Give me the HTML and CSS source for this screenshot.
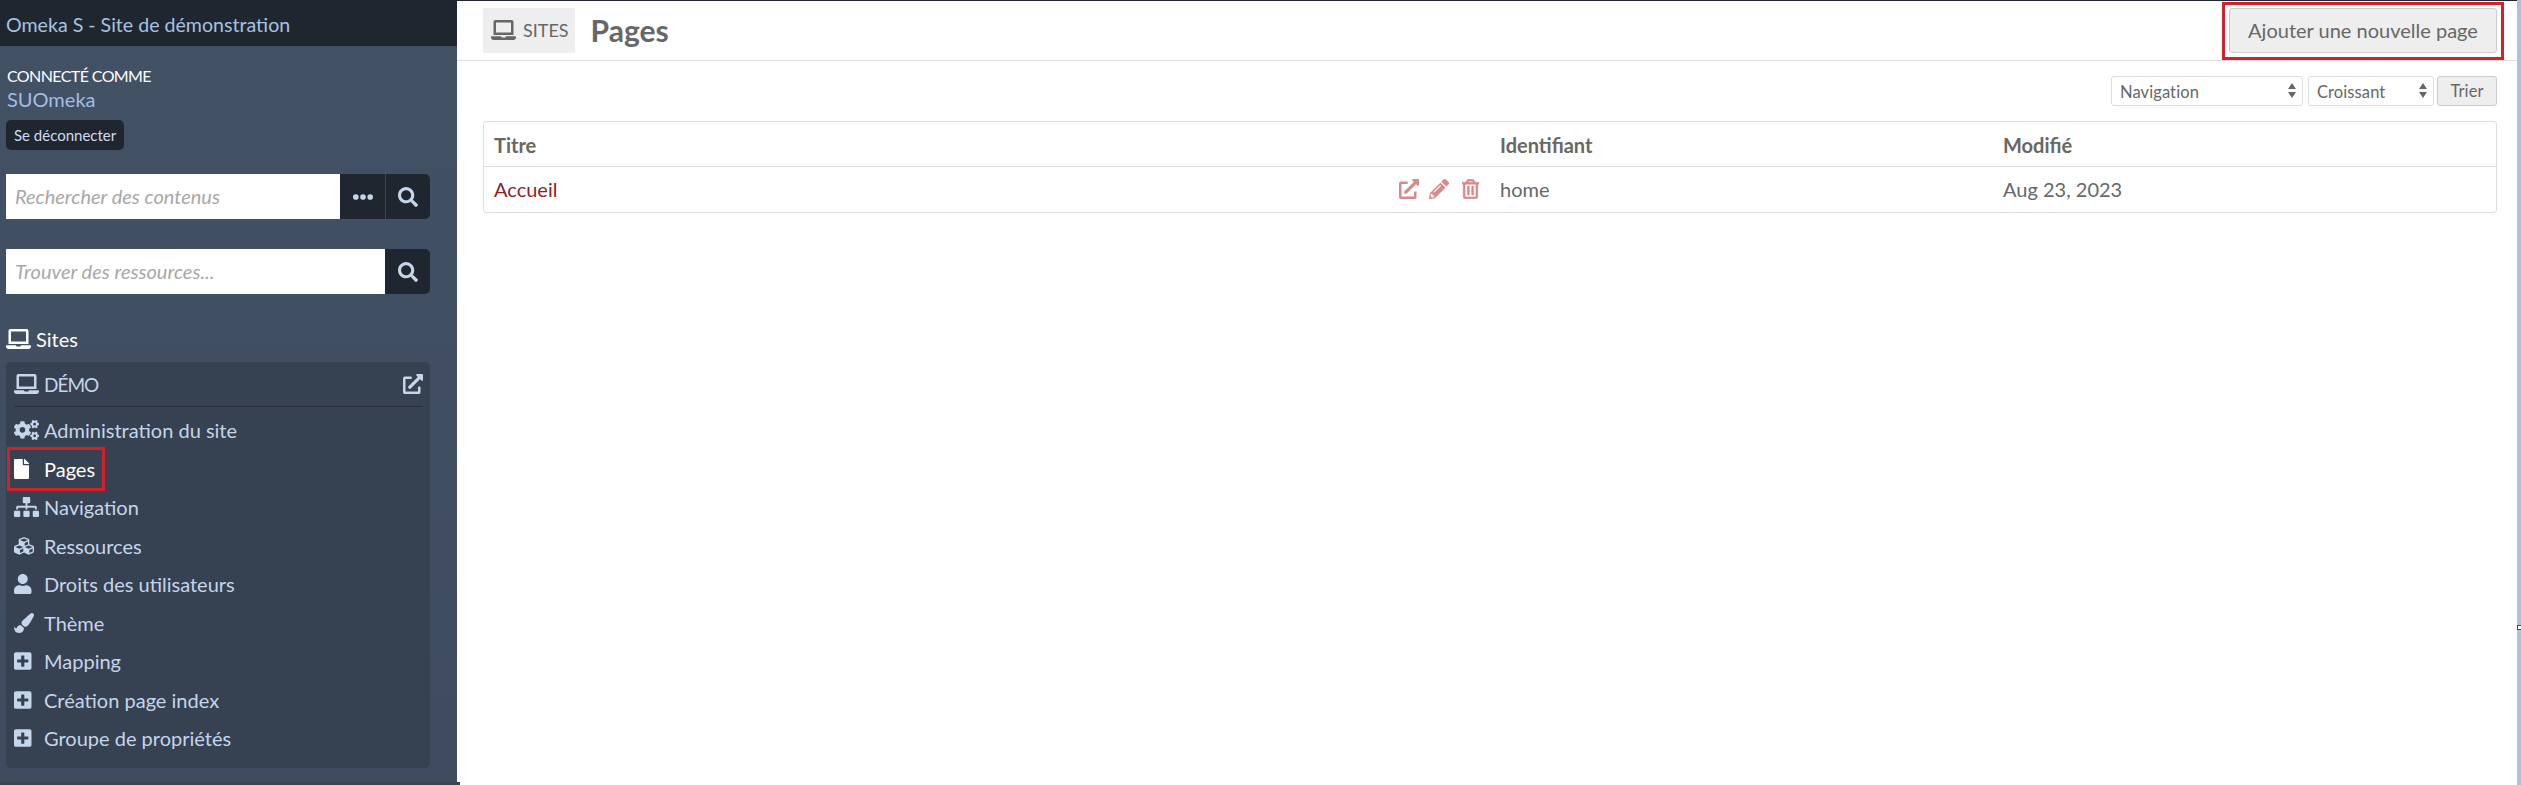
FILE: index.html
```html
<!DOCTYPE html>
<html lang="fr">
<head>
  <meta charset="UTF-8">
  <title>Pages · Omeka S</title>
  <link rel="stylesheet" href="styles.css">
</head>
<body>
<svg class="sprite" aria-hidden="true">
  <symbol id="i-laptop" viewBox="0 0 640 512"><path d="M624 416H381.54c-.74 19.81-14.71 32-32.74 32H288c-18.69 0-33.02-17.47-32.77-32H16c-8.8 0-16 7.2-16 16v16c0 35.2 28.8 64 64 64h512c35.2 0 64-28.8 64-64v-16c0-8.8-7.2-16-16-16zM576 48c0-26.4-21.6-48-48-48H112C85.6 0 64 21.6 64 48v336h512V48zm-64 272H128V64h384v256z"/></symbol>
  <symbol id="i-search" viewBox="0 0 512 512"><path d="M505 442.7L405.3 343c-4.5-4.5-10.6-7-17-7H372c27.6-35.3 44-79.7 44-128C416 93.1 322.9 0 208 0S0 93.1 0 208s93.1 208 208 208c48.3 0 92.7-16.4 128-44v16.3c0 6.4 2.5 12.5 7 17l99.7 99.7c9.4 9.4 24.6 9.4 33.9 0l28.3-28.3c9.4-9.4 9.4-24.6.1-34zM208 336c-70.7 0-128-57.2-128-128 0-70.7 57.2-128 128-128 70.7 0 128 57.2 128 128 0 70.7-57.2 128-128 128z"/></symbol>
  <symbol id="i-dots" viewBox="0 0 512 512"><circle cx="72" cy="256" r="72"/><circle cx="256" cy="256" r="72"/><circle cx="440" cy="256" r="72"/></symbol>
  <symbol id="i-external" viewBox="0 0 512 512"><path d="M432,320H400a16,16,0,0,0-16,16V448H64V128H208a16,16,0,0,0,16-16V80a16,16,0,0,0-16-16H48A48,48,0,0,0,0,112V464a48,48,0,0,0,48,48H400a48,48,0,0,0,48-48V336A16,16,0,0,0,432,320ZM488,0h-128c-21.37,0-32.05,25.91-17,41l35.73,35.73L135,320.37a24,24,0,0,0,0,34L157.67,377a24,24,0,0,0,34,0L435.28,133.32,471,169c15,15,41,4.5,41-17V24A24,24,0,0,0,488,0Z"/></symbol>
  <symbol id="i-cogs" viewBox="0 0 640 512" preserveAspectRatio="xMinYMid"><path d="M512.1 191l-8.2 14.3c-3 5.3-9.4 7.5-15.1 5.4-11.8-4.4-22.6-10.7-32.1-18.6-4.6-3.8-5.8-10.5-2.8-15.7l8.2-14.3c-6.9-8-12.3-17.3-15.9-27.4h-16.5c-6 0-11.2-4.3-12.2-10.3-2-12-2.1-24.6 0-37.1 1-6 6.2-10.4 12.2-10.4h16.5c3.6-10.1 9-19.4 15.9-27.4l-8.2-14.3c-3-5.2-1.9-11.9 2.8-15.7 9.5-7.9 20.4-14.2 32.1-18.6 5.7-2.1 12.1.1 15.1 5.4l8.2 14.3c10.5-1.9 21.2-1.9 31.7 0L552 6.3c3-5.3 9.4-7.5 15.1-5.4 11.8 4.4 22.6 10.7 32.1 18.6 4.6 3.8 5.8 10.5 2.8 15.7l-8.2 14.3c6.9 8 12.3 17.3 15.9 27.4h16.5c6 0 11.2 4.3 12.2 10.3 2 12 2.1 24.6 0 37.1-1 6-6.2 10.4-12.2 10.4h-16.5c-3.6 10.1-9 19.4-15.9 27.4l8.2 14.3c3 5.2 1.9 11.9-2.8 15.7-9.5 7.9-20.4 14.2-32.1 18.6-5.7 2.1-12.1-.1-15.1-5.4l-8.2-14.3c-10.4 1.9-21.2 1.9-31.7 0zm-10.5-58.8c38.5 29.6 82.4-14.3 52.8-52.8-38.5-29.7-82.4 14.3-52.8 52.8zM386.3 286.1l33.7 16.8c10.1 5.8 14.5 18.1 10.5 29.1-8.9 24.2-26.4 46.4-42.6 65.8-7.4 8.9-20.2 11.1-30.3 5.3l-29.1-16.8c-16 13.7-34.6 24.6-54.9 31.7v33.6c0 11.6-8.3 21.6-19.7 23.6-24.6 4.2-50.4 4.4-75.9 0-11.5-2-20-11.9-20-23.6V418c-20.3-7.2-38.9-18-54.9-31.7L74 403c-10 5.8-22.9 3.6-30.3-5.3-16.2-19.4-33.3-41.6-42.2-65.7-4-10.9.4-23.2 10.5-29.1l33.3-16.8c-3.9-20.9-3.9-42.4 0-63.4L12 205.8c-10.1-5.8-14.6-18.1-10.5-29 8.9-24.2 26-46.4 42.2-65.8 7.4-8.9 20.2-11.1 30.3-5.3l29.1 16.8c16-13.7 34.6-24.6 54.9-31.7V57.1c0-11.5 8.2-21.5 19.6-23.5 24.6-4.2 50.5-4.4 76-.1 11.5 2 20 11.9 20 23.6v33.6c20.3 7.2 38.9 18 54.9 31.7l29.1-16.8c10-5.8 22.9-3.6 30.3 5.3 16.2 19.4 33.2 41.6 42.1 65.8 4 10.9.1 23.2-10 29.1l-33.7 16.8c3.9 21 3.9 42.5 0 63.5zm-117.6 21.1c59.2-77-28.7-164.9-105.7-105.7-59.2 77 28.7 164.9 105.7 105.7zm243.4 182.7l-8.2 14.3c-3 5.3-9.4 7.5-15.1 5.4-11.8-4.4-22.6-10.7-32.1-18.6-4.6-3.8-5.8-10.5-2.8-15.7l8.2-14.3c-6.9-8-12.3-17.3-15.9-27.4h-16.5c-6 0-11.2-4.3-12.2-10.3-2-12-2.1-24.6 0-37.1 1-6 6.2-10.4 12.2-10.4h16.5c3.6-10.1 9-19.4 15.9-27.4l-8.2-14.3c-3-5.2-1.9-11.9 2.8-15.7 9.5-7.9 20.4-14.2 32.1-18.6 5.7-2.1 12.1.1 15.1 5.4l8.2 14.3c10.5-1.9 21.2-1.9 31.7 0l8.2-14.3c3-5.3 9.4-7.5 15.1-5.4 11.8 4.4 22.6 10.7 32.1 18.6 4.6 3.8 5.8 10.5 2.8 15.7l-8.2 14.3c6.9 8 12.3 17.3 15.9 27.4h16.5c6 0 11.2 4.3 12.2 10.3 2 12 2.1 24.6 0 37.1-1 6-6.2 10.4-12.2 10.4h-16.5c-3.6 10.1-9 19.4-15.9 27.4l8.2 14.3c3 5.2 1.9 11.9-2.8 15.7-9.5 7.9-20.4 14.2-32.1 18.6-5.7 2.1-12.1-.1-15.1-5.4l-8.2-14.3c-10.4 1.9-21.2 1.9-31.7 0zM501.6 431c38.5 29.6 82.4-14.3 52.8-52.8-38.5-29.6-82.4 14.3-52.8 52.8z"/></symbol>
  <symbol id="i-file" viewBox="0 0 384 512" preserveAspectRatio="xMinYMid"><path d="M224 136V0H24C10.7 0 0 10.7 0 24v464c0 13.3 10.7 24 24 24h336c13.3 0 24-10.7 24-24V160H248c-13.2 0-24-10.8-24-24zm160-14.1v6.1H256V0h6.1c6.4 0 12.5 2.5 17 7l97.9 98c4.5 4.5 7 10.6 7 16.9z"/></symbol>
  <symbol id="i-sitemap" viewBox="0 0 640 512" preserveAspectRatio="xMinYMid"><path d="M128 352H32c-17.67 0-32 14.33-32 32v96c0 17.67 14.33 32 32 32h96c17.67 0 32-14.33 32-32v-96c0-17.67-14.33-32-32-32zm-24-80h192v48h48v-48h192v48h48v-57.59c0-21.17-17.23-38.41-38.41-38.41H344v-64h40c17.67 0 32-14.33 32-32V32c0-17.67-14.33-32-32-32H256c-17.67 0-32 14.33-32 32v96c0 17.67 14.33 32 32 32h40v64H94.41C73.23 224 56 241.23 56 262.41V320h48v-48zm264 80h-96c-17.67 0-32 14.33-32 32v96c0 17.67 14.33 32 32 32h96c17.67 0 32-14.33 32-32v-96c0-17.67-14.33-32-32-32zm240 0h-96c-17.67 0-32 14.33-32 32v96c0 17.67 14.33 32 32 32h96c17.67 0 32-14.33 32-32v-96c0-17.67-14.33-32-32-32z"/></symbol>
  <symbol id="i-cubes" viewBox="0 0 512 512" preserveAspectRatio="xMinYMid"><path d="M488.6 250.2L392 214V105.5c0-15-9.3-28.4-23.4-33.7l-100-37.5c-8.1-3.1-17.1-3.1-25.3 0l-100 37.5c-14.1 5.3-23.4 18.7-23.4 33.7V214l-96.6 36.2C9.3 255.5 0 268.9 0 283.9V394c0 13.6 7.7 26.1 19.9 32.2l100 50c10.1 5.1 22.1 5.1 32.2 0l103.9-52 103.9 52c10.1 5.1 22.1 5.1 32.2 0l100-50c12.2-6.1 19.9-18.6 19.9-32.2V283.9c0-15-9.3-28.4-23.4-33.7zM358 214.8l-85 31.9v-68.2l85-37v73.3zM154 104.1l102-38.2 102 38.2v.6l-102 41.4-102-41.4v-.6zm84 291.1l-85 42.5v-79.1l85-38.8v75.4zm0-112l-102 41.4-102-41.4v-.6l102-38.2 102 38.2v.6zm240 112l-85 42.5v-79.1l85-38.8v75.4zm0-112l-102 41.4-102-41.4v-.6l102-38.2 102 38.2v.6z"/></symbol>
  <symbol id="i-user" viewBox="0 0 448 512" preserveAspectRatio="xMinYMid"><path d="M224 256c70.7 0 128-57.3 128-128S294.7 0 224 0 96 57.3 96 128s57.3 128 128 128zm89.6 32h-16.7c-22.2 10.2-46.9 16-72.9 16s-50.6-5.8-72.9-16h-16.7C60.2 288 0 348.2 0 422.4V464c0 26.5 21.5 48 48 48h352c26.5 0 48-21.5 48-48v-41.6c0-74.2-60.2-134.4-134.4-134.4z"/></symbol>
  <symbol id="i-brush" viewBox="0 0 512 512" preserveAspectRatio="xMinYMid"><path d="M167.02 309.34c-40.12 2.58-76.53 17.86-97.19 72.3-2.35 6.21-8 9.98-14.59 9.98-11.11 0-45.46-27.67-55.25-34.35C0 439.62 37.93 512 128 512c75.86 0 128-43.77 128-120.19 0-3.11-.65-6.08-.97-9.13l-88.01-73.34zM457.89 0c-15.16 0-29.37 6.71-40.21 16.45C213.27 199.05 192 203.34 192 257.09c0 13.7 3.25 26.76 8.73 38.7l63.82 53.18c7.21 1.8 14.64 3.03 22.39 3.03 62.11 0 98.11-45.47 211.16-256.46 7.38-14.35 13.9-29.85 13.9-45.99C512 20.64 486 0 457.89 0z"/></symbol>
  <symbol id="i-plus" viewBox="0 0 448 512" preserveAspectRatio="xMinYMid"><path d="M400 32H48C21.5 32 0 53.5 0 80v352c0 26.5 21.5 48 48 48h352c26.5 0 48-21.5 48-48V80c0-26.5-21.5-48-48-48zm-32 252c0 6.6-5.4 12-12 12h-92v92c0 6.6-5.4 12-12 12h-56c-6.6 0-12-5.4-12-12v-92H92c-6.6 0-12-5.4-12-12v-56c0-6.6 5.4-12 12-12h92v-92c0-6.6 5.4-12 12-12h56c6.6 0 12 5.4 12 12v92h92c6.6 0 12 5.4 12 12v56z"/></symbol>
  <symbol id="i-pencil" viewBox="0 0 512 512"><path d="M497.9 142.1l-46.1 46.1c-4.7 4.7-12.3 4.7-17 0l-111-111c-4.7-4.7-4.7-12.3 0-17l46.1-46.1c18.7-18.7 49.1-18.7 67.9 0l60.1 60.1c18.8 18.7 18.8 49.1 0 67.9zM284.2 99.8L21.6 362.4.4 483.9c-2.9 16.4 11.4 30.6 27.8 27.8l121.5-21.3 262.6-262.6c4.7-4.7 4.7-12.3 0-17l-111-111c-4.8-4.7-12.4-4.7-17.1 0zM124.1 339.9c-5.5-5.5-5.5-14.3 0-19.8l154-154c5.5-5.5 14.3-5.5 19.8 0s5.5 14.3 0 19.8l-154 154c-5.5 5.5-14.3 5.5-19.8 0zM88 424h48v36.3l-64.5 11.3-31.1-31.1L51.7 376H88v48z"/></symbol>
  <symbol id="i-trash" viewBox="0 0 448 512"><path d="M268 416h24a12 12 0 0 0 12-12V188a12 12 0 0 0-12-12h-24a12 12 0 0 0-12 12v216a12 12 0 0 0 12 12zM432 80h-82.41l-34-56.7A48 48 0 0 0 274.41 0H173.59a48 48 0 0 0-41.16 23.3L98.41 80H16A16 16 0 0 0 0 96v16a16 16 0 0 0 16 16h16v336a48 48 0 0 0 48 48h288a48 48 0 0 0 48-48V128h16a16 16 0 0 0 16-16V96a16 16 0 0 0-16-16zM171.84 50.91A6 6 0 0 1 177 48h94a6 6 0 0 1 5.15 2.91L293.61 80H154.39zM368 464H80V128h288zm-212-48h24a12 12 0 0 0 12-12V188a12 12 0 0 0-12-12h-24a12 12 0 0 0-12 12v216a12 12 0 0 0 12 12z"/></symbol>
</svg>

<aside class="sidebar">
  <div class="site-title">Omeka S - Site de démonstration</div>
  <div class="user">
    <div class="user-label">Connecté comme</div>
    <div class="user-name">SUOmeka</div>
    <a class="logout" href="#">Se déconnecter</a>
  </div>
  <form class="search search-content">
    <input type="text" placeholder="Rechercher des contenus">
    <button type="button" class="search-btn"><svg class="ic-dots"><use href="#i-dots"/></svg></button>
    <button type="button" class="search-btn sep"><svg class="ic-search"><use href="#i-search"/></svg></button>
  </form>
  <form class="search search-res">
    <input type="text" placeholder="Trouver des ressources...">
    <button type="button" class="search-btn"><svg class="ic-search"><use href="#i-search"/></svg></button>
  </form>
  <div class="section-title"><svg class="ic-laptop"><use href="#i-laptop"/></svg>Sites</div>
  <nav class="panel">
    <div class="panel-head">
      <svg class="ic-laptop"><use href="#i-laptop"/></svg><span class="panel-name">Démo</span>
      <svg class="ic-ext"><use href="#i-external"/></svg>
    </div>
    <ul class="menu">
      <li><svg><use href="#i-cogs"/></svg>Administration du site</li>
      <li class="active"><svg><use href="#i-file"/></svg>Pages</li>
      <li><svg><use href="#i-sitemap"/></svg>Navigation</li>
      <li><svg><use href="#i-cubes"/></svg>Ressources</li>
      <li><svg><use href="#i-user"/></svg>Droits des utilisateurs</li>
      <li><svg><use href="#i-brush"/></svg>Thème</li>
      <li><svg><use href="#i-plus"/></svg>Mapping</li>
      <li><svg><use href="#i-plus"/></svg>Création page index</li>
      <li><svg><use href="#i-plus"/></svg>Groupe de propriétés</li>
    </ul>
  </nav>
</aside>

<main class="main">
  <header class="topbar">
    <span class="chip"><svg><use href="#i-laptop"/></svg>Sites</span>
    <h1>Pages</h1>
    <a class="add-btn" href="#">Ajouter une nouvelle page</a>
  </header>
  <div class="content">
    <form class="sorting">
      <span class="select nav-select"><select><option>Navigation</option></select></span>
      <span class="select order-select"><select><option>Croissant</option></select></span>
      <button type="button" class="sort-btn">Trier</button>
    </form>
    <table class="pages">
      <colgroup><col class="col-title"><col class="col-slug"><col></colgroup>
      <thead>
        <tr><th>Titre</th><th>Identifiant</th><th>Modifié</th></tr>
      </thead>
      <tbody>
        <tr>
          <td>
            <div class="title-cell">
              <a href="#">Accueil</a>
              <span class="actions">
                <svg class="a-ext"><use href="#i-external"/></svg>
                <svg class="a-pen"><use href="#i-pencil"/></svg>
                <svg class="a-del"><use href="#i-trash"/></svg>
              </span>
            </div>
          </td>
          <td>home</td>
          <td>Aug 23, 2023</td>
        </tr>
      </tbody>
    </table>
  </div>
</main>
<div class="edge"><span class="edge-handle"></span></div>
</body>
</html>
```

FILE: styles.css
```css
*, *::before, *::after { box-sizing: border-box; }
html, body { height: 100%; }
body { margin: 0; display: flex; overflow: hidden; font-family: Lato, "Liberation Sans", sans-serif; color: #676767; background: #fff; }
svg { fill: currentColor; display: block; flex: none; }
.sprite { display: none; }

/* sidebar */
.sidebar { position: relative; width: 457px; flex: none; background: linear-gradient(#435165, #3f4c60); color: #a9c0e0; }
.sidebar::after { content: ""; position: absolute; left: 0; bottom: 0; width: 460px; height: 3px; background: #39444f; }
.site-title { height: 46px; padding: 0 6px; line-height: 50px; background: #20262f; font-size: 19.6px; color: #a6c2e2; }
.user { padding: 21px 6px 0; }
.user-label { padding-left: 1px; font-size: 16px; line-height: 18px; color: #fff; text-transform: uppercase; letter-spacing: -0.6px; }
.user-name { padding-left: 1px; margin-top: 2px; font-size: 20px; line-height: 24px; color: #a3bde2; }
.logout { display: inline-block; margin-top: 9px; height: 30px; padding: 0 8px; line-height: 30px; font-size: 15px; color: #cfdcef; background: #20262f; border-radius: 5px; text-decoration: none; }
.search { display: flex; width: 424px; height: 45px; margin-left: 6px; }
.search-content { margin-top: 24px; }
.search-res { margin-top: 30px; }
.search input { flex: 1; min-width: 0; border: 0; padding: 0 9px 1px; font: italic 20px Lato, sans-serif; background: #fff; outline: 0; }
.search input::placeholder { color: #a8a8a8; opacity: 1; }
.search-btn { width: 45px; padding: 0; border: 0; background: #20262f; color: #c5d5ea; display: flex; align-items: center; justify-content: center; }
.search-btn.sep { border-left: 1px solid #3b4656; }
.search-btn:last-child { border-radius: 0 5px 5px 0; }
.ic-search { width: 20px; height: 20px; }
.ic-dots { width: 20px; height: 20px; }
.section-title { display: flex; align-items: center; gap: 5px; margin: 32px 0 0 6px; height: 26px; font-size: 20px; color: #fff; }
.ic-laptop { width: 25px; height: 20px; }
.panel { width: 424px; height: 406px; margin: 10px 0 0 6px; padding: 0 7px 0 8px; background: #364152; border-radius: 5px; color: #c5d5ea; }
.panel-head { display: flex; align-items: center; height: 45px; border-bottom: 1px solid #262e3a; }
.panel-name { flex: 1; margin-left: 5px; font-size: 19px; letter-spacing: -1px; text-transform: uppercase; }
.ic-ext { width: 20px; height: 20px; }
.menu { list-style: none; margin: 4px 0 0; padding: 0; }
.menu li { position: relative; display: flex; align-items: center; height: 38.5px; font-size: 20px; }
.menu li svg { width: 25px; height: 20px; margin-right: 5px; }
.menu li.active { color: #fff; }
.menu li.active::after { content: ""; position: absolute; left: -7px; top: -3px; width: 98px; height: 44px; border: 3px solid #d1222c; pointer-events: none; }

/* main */
.main { flex: 1; min-width: 0; border-top: 1px solid #20262f; }
.topbar { display: flex; align-items: center; height: 60px; padding: 0 20px 1px 26px; border-bottom: 1px solid #ddd; }
.chip { display: flex; align-items: center; gap: 7px; height: 45px; padding: 0 6px 0 8px; background: #eee; font-size: 18px; text-transform: uppercase; }
.chip svg { width: 25px; height: 20px; }
h1 { flex: 1; margin: 0 0 0 16px; font-size: 30px; font-weight: 700; }
.add-btn { position: relative; display: block; width: 268px; height: 45px; line-height: 43px; text-align: center; font-size: 20px; color: #676767; text-decoration: none; background: #eee; border: 1px solid #ccc; border-radius: 3px; }
.add-btn::after { content: ""; position: absolute; left: -8px; right: -8px; top: -7px; bottom: -8px; border: 3px solid #d1222c; pointer-events: none; }
.content { padding: 15px 20px 0 26px; }
.sorting { display: flex; justify-content: flex-end; align-items: stretch; height: 30px; }
.select { position: relative; display: block; }
.nav-select { width: 192px; margin-right: 5px; }
.order-select { width: 126px; margin-right: 3px; }
.select::before, .select::after { content: ""; position: absolute; right: 7px; border: 4px solid transparent; pointer-events: none; }
.select::before { top: 3px; border-bottom: 6px solid #676767; }
.select::after { top: 16px; border-top: 6px solid #676767; }
.select select { width: 100%; height: 100%; appearance: none; padding: 2px 8px 0; font: 16.5px Lato, sans-serif; letter-spacing: 0.1px; color: #676767; background: #fff; border: 1px solid #ddd; border-radius: 3px; }
.sort-btn { width: 60px; padding: 0; font: 16.5px Lato, sans-serif; letter-spacing: 0.1px; color: #676767; background: #eee; border: 1px solid #ccc; border-radius: 3px; }
.pages { width: 100%; margin-top: 15px; border-collapse: separate; border-spacing: 0; table-layout: fixed; border: 1px solid #ddd; border-radius: 3px; font-size: 20px; }
.col-title { width: 1006px; }
.col-slug { width: 503px; }
.pages th, .pages td { height: 45px; padding: 0 10px; text-align: left; }
.pages td { padding-bottom: 2px; }
.pages th { font-weight: 700; padding-top: 1px; border-bottom: 1px solid #ddd; }
.pages td a { color: #8f1d2c; text-decoration: none; }
.title-cell { display: flex; align-items: center; justify-content: space-between; padding-right: 1px; }
.actions { display: flex; align-items: center; color: #d68a90; }
.a-ext { width: 20px; height: 20px; }
.a-pen { width: 20px; height: 20px; margin-left: 10px; }
.a-del { width: 17px; height: 20px; margin-left: 13px; stroke: currentColor; stroke-width: 14px; }

/* window edge */
.edge { position: relative; width: 4px; flex: none; background: #b3c0d5; }
.edge-handle { position: absolute; left: 0; top: 625px; width: 4px; height: 5px; background: #fff; border: 1px solid #444; border-right: 0; }
```
